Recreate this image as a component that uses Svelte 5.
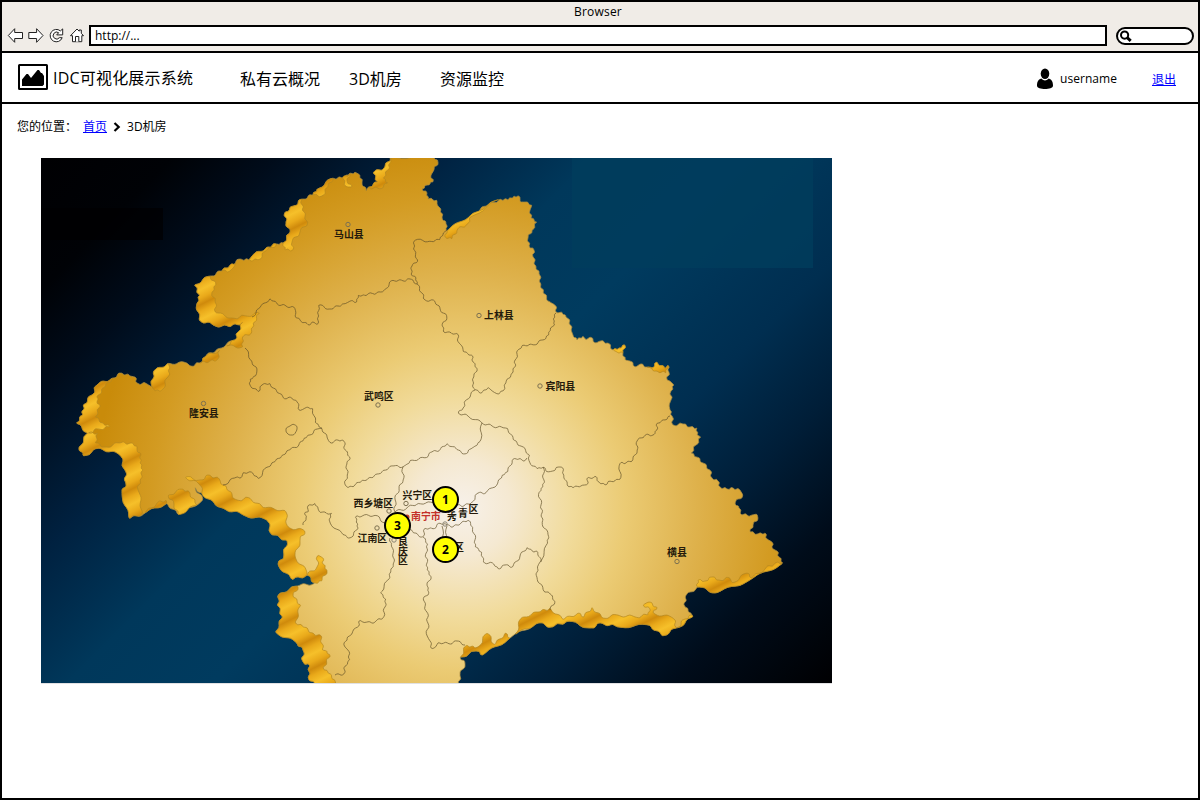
<script>
  const navItems = [
    { label: '私有云概况', width: 109 },
    { label: '3D机房', width: 91 },
    { label: '资源监控', width: 70 }
  ];

  const markers = [
    { n: 1, x: 446, y: 500 },
    { n: 2, x: 446, y: 550 },
    { n: 3, x: 398, y: 526 }
  ];

  const land =
    'M391,157 L385,167 373,173 378,182 368,187 366,191 362,182 360,175 355,172 348,175 342,178 333,178 317,189 313,195 302,199 294,206 285,212 286,222 290,233 283,243 277,244 267,247 252,256 249,260 241,259 230,265 222,271 210,276 194,285 200,295 197,303 199,320 213,325 230,327 243,322 238,332 235,340 217,349 205,357 200,363 190,366 187,363 168,363 153,372 152,387 147,384 137,383 135,377 130,376 122,373 112,378 97,385 92,395 83,405 83,415 76,423 88,433 79,447 83,456 100,448 120,455 125,470 126,483 122,493 129,519 145,513 167,503 178,515 203,500 195,487 205,498 223,508 243,515 267,520 272,535 287,540 284,555 278,565 292,580 307,575 315,583 298,586 280,593 277,605 283,617 275,632 297,643 303,650 303,662 310,666 308,677 315,685 459,685 460,676 465,663 460,657 477,651 483,655 510,638 537,623 553,627 567,621 590,628 602,623 617,627 650,625 662,636 677,628 693,617 691,613 685,607 685,597 697,587 717,593 750,580 783,563 779,557 777,551 773,549 772,542 767,539 765,533 758,534 750,532 753,525 758,518 757,514 752,515 742,515 739,508 735,503 743,495 740,490 733,488 727,489 720,487 718,481 712,478 710,470 703,463 697,457 691,453 696,445 701,437 697,435 697,428 690,427 683,424 673,425 672,416 670,410 669,405 671,400 671,391 674,385 670,381 667,380 669,372 668,365 665,369 657,362 652,368 647,367 640,364 636,367 630,361 625,360 623,353 625,345 619,348 613,350 608,343 600,341 596,343 590,337 586,340 583,336 577,340 573,335 571,330 570,320 566,317 562,312 557,313 555,305 550,302 543,293 541,284 539,274 536,266 533,257 534,250 529,246 528,238 532,230 537,222 531,218 530,210 532,205 525,202 520,202 520,197 514,196 508,200 500,199 487,206 473,213 447,231 446,224 442,217 441,209 437,205 437,200 428,199 427,193 422,189 427,185 433,182 431,175 434,170 438,162 434,157 Z';

  const walls = [
    'M391,157 L385,167 373,173 378,182 368,187 379,189 388,183 383,178 388,170 390,163 Z',
    'M342,178 L347,187 352,187 347,181 350,174 Z',
    'M317,189 L313,195 322,196 328,187 333,178 Z',
    'M302,199 L294,206 285,212 286,222 290,233 283,243 285,250 293,250 292,242 300,232 308,222 302,210 Z',
    'M277,244 L267,247 252,256 249,260 258,260 266,251 Z',
    'M236,263 L230,265 222,271 230,271 234,267 Z',
    'M210,276 L194,285 200,295 197,303 199,320 213,325 230,327 243,322 238,332 235,340 226,346 243,347 242,338 252,332 253,323 260,313 246,316 233,318 216,313 215,302 212,292 216,285 Z',
    'M220,350 L205,357 200,363 210,361 217,360 Z',
    'M168,363 L153,372 152,387 155,391 162,390 168,377 170,368 Z',
    'M112,378 L97,385 92,395 83,405 83,415 76,423 88,433 79,447 83,456 100,448 120,455 125,470 126,483 122,493 129,519 143,513 138,490 140,480 143,470 140,463 141,455 137,450 137,446 130,443 120,443 105,447 95,443 98,433 88,433 99,429 110,427 103,423 95,417 100,407 97,401 98,395 105,387 Z',
    'M145,513 L167,503 166,500 157,503 Z',
    'M168,495 L183,489 190,493 195,503 197,505 178,515 174,504 Z',
    'M185,477 L200,480 210,475 220,480 227,490 237,500 250,498 263,508 285,510 288,527 305,531 300,540 295,557 307,572 307,575 292,580 278,565 284,555 287,540 272,535 267,520 243,515 223,508 205,498 199,484 Z',
    'M307,575 L317,567 318,555 323,558 323,564 327,570 322,581 315,583 Z',
    'M298,586 L280,593 277,605 283,617 275,632 297,643 303,650 303,662 310,666 308,677 315,685 336,685 335,680 328,673 323,667 330,657 327,651 322,650 322,637 313,633 303,627 295,622 301,605 293,597 Z',
    'M460,657 L467,645 475,648 478,647 487,633 495,645 505,633 510,638 483,655 477,651 Z',
    'M515,635 L522,617 540,612 550,608 563,620 578,613 584,617 592,607 602,618 618,615 635,617 648,615 650,609 643,605 648,602 657,607 653,613 673,618 677,628 662,636 650,625 617,627 602,623 590,628 567,621 553,627 537,623 Z',
    'M697,587 L698,580 705,581 712,577 719,580 730,578 732,583 747,573 752,578 765,569 775,563 783,563 750,580 717,593 Z',
    'M677,628 L685,619 692,615 693,617 Z',
    'M445,237 L452,239 457,230 467,224 472,216 500,199 473,213 447,231 Z',
    'M613,350 L619,348 625,345 623,353 617,352 Z',
    'M647,367 L652,368 657,362 665,369 668,365 666,373 657,371 Z'
  ];

  const borders = [
    'M252,317 L260,308 270,298 277,304 286,306 295,308 296,313 295,316 300,320 308,325 314,322 317,325 319,316 318,305 330,309 338,306 345,304 350,301 357,302 358,295 366,296 370,292 375,295 385,289 393,280 403,281 410,279 417,284',
    'M447,230 L443,233 440,240 430,241 415,240 413,249 418,260 412,266 411,274 416,278 417,284',
    'M417,284 L422,293 425,300 435,301 440,309 447,317 442,326 445,333 457,333 459,343 463,347 463,352 472,355 473,362 477,368 474,377 472,386 475,390 482,393 488,387 492,391 497,394 503,391 506,383 511,374 515,367 515,360 519,349 524,345 533,345 543,340 549,335 550,328 555,325 553,319 556,313',
    'M475,390 L466,400 463,408 458,413 468,416 482,423 492,426 503,428 508,428 513,440 521,446 530,455 528,458 530,463 537,469 543,467 548,472 553,471 558,467 562,467 564,475 567,485 573,488 582,485 587,485 588,477 592,479 595,476 599,482 605,485 610,481 620,480 620,463 626,463 633,460 637,450 637,441 645,435 653,435 657,430 657,423 665,420 670,416',
    'M482,423 L480,442 475,446 471,449 465,454 457,450 447,443 440,450 432,452 425,458 412,460 407,464 403,467 394,466 383,470 373,478 362,480 355,485 348,488 345,485 347,475 347,464 350,457 345,450 344,441 338,440 330,443 327,438 322,428 315,423 313,408 305,408 300,411 297,402 292,398 283,398 282,394 277,393 270,383 262,385 258,392 250,385 250,379 256,376 257,371 252,361 245,348',
    'M322,428 L317,429 310,435 304,438 299,445 290,450 282,455 275,462 267,467 258,479 253,473 243,472 242,477 235,478 223,485',
    'M403,467 L403,480 399,488 395,500 395,512',
    'M395,512 L407,508 418,503 433,503 457,505 464,506 472,502 478,493 486,493 498,483 502,475 508,472 512,460 520,458 524,462 527,458',
    'M543,467 L544,480 543,487 539,492 541,505 542,513 542,522 548,535 548,543 540,562 537,567 537,577 543,590 550,594 555,601 550,610',
    'M541,562 L538,552 532,551 527,547 520,556 513,567 505,565 498,569 494,564 483,562 482,552 475,547 475,540 473,527 468,520 461,523 453,527 447,525 440,523 433,529 425,528 423,537 413,533 407,526',
    'M423,537 L428,544 426,553 427,563 427,570 431,576 427,586 429,592 423,600 427,612 428,623 427,636 430,641 432,649 436,647 438,642 449,644 457,641 465,645',
    'M385,523 L375,515 362,516 355,517 358,524 357,530 350,538 343,535 330,523 329,519 332,513 320,513 318,509 315,503 307,507 309,512 305,512 306,518 303,525',
    'M390,538 L391,546 395,560 393,564 391,572 388,580 380,593 386,599 385,607 383,618 377,620 373,624 360,620 358,627 347,637 344,646 348,650 350,660 345,666 344,674 335,675',
    'M286,428 L290,426 293,424 297,426 297,430 294,435 289,435 286,432 Z',
    'M442,526 L443,547',
    'M447,526 L446,546'
  ];

  // Turns a polyline into a wavy, rounded outline. The wave depends only on a
  // segment's two ends, so shapes that share an edge keep it in common.
  function wavy(d, sharp = 0.3) {
    const closed = d.includes('Z');
    const nums = d.match(/[\d.]+/g).map(Number);
    const pts = [];
    for (let i = 0; i < nums.length; i += 2) pts.push([nums[i], nums[i + 1]]);
    const out = [];
    const count = closed ? pts.length : pts.length - 1;
    for (let i = 0; i < count; i++) {
      let a = pts[i];
      let b = pts[(i + 1) % pts.length];
      out.push(a);
      const len = Math.hypot(b[0] - a[0], b[1] - a[1]);
      if (len < 6 || len > 60) continue;
      const flip = a[0] > b[0] || (a[0] === b[0] && a[1] > b[1]);
      const [p, q] = flip ? [b, a] : [a, b];
      const nx = -(q[1] - p[1]) / len;
      const ny = (q[0] - p[0]) / len;
      const h = (p[0] * 7 + p[1] * 13 + q[0] * 5 + q[1] * 3) % 2 ? 1 : -1;
      const amp = h * Math.min(1.7, len * 0.14);
      const mids = [
        [p[0] + (q[0] - p[0]) * 0.35 + nx * amp, p[1] + (q[1] - p[1]) * 0.35 + ny * amp],
        [p[0] + (q[0] - p[0]) * 0.68 - nx * amp, p[1] + (q[1] - p[1]) * 0.68 - ny * amp]
      ];
      out.push(...(flip ? mids.reverse() : mids));
    }
    if (!closed) out.push(pts[pts.length - 1]);
    const n = out.length;
    const mix = (u, v, t) => [(u[0] + (v[0] - u[0]) * t).toFixed(1), (u[1] + (v[1] - u[1]) * t).toFixed(1)].join();
    if (closed) {
      let s = 'M' + mix(out[0], out[1], sharp);
      for (let i = 1; i <= n; i++) {
        const c = out[i % n];
        s += ' L' + mix(c, out[(i - 1) % n], sharp) + ' Q' + c + ' ' + mix(c, out[(i + 1) % n], sharp);
      }
      return s + ' Z';
    }
    let s = 'M' + out[0];
    for (let i = 1; i < n - 1; i++) {
      s += ' L' + mix(out[i], out[i - 1], 0.45) + ' Q' + out[i] + ' ' + mix(out[i], out[i + 1], 0.45);
    }
    return s + ' L' + out[n - 1];
  }

  const places = [
    { t: '马山县', x: 334, y: 237.5, cx: 348, cy: 224.5 },
    { t: '上林县', x: 484, y: 319, cx: 479, cy: 315.5 },
    { t: '武鸣区', x: 364, y: 400, cx: 378, cy: 405 },
    { t: '宾阳县', x: 545.5, y: 390, cx: 540, cy: 386 },
    { t: '隆安县', x: 189, y: 416.5, cx: 203.5, cy: 403.5 },
    { t: '横县', x: 667, y: 555.5, cx: 677, cy: 561.5 },
    { t: '兴宁区', x: 402.5, y: 499, cx: 406, cy: 503.5 },
    { t: '西乡塘区', x: 353.5, y: 506.5, cx: 389, cy: 511 },
    { t: '江南区', x: 357.5, y: 542, cx: 377, cy: 528 }
  ];

  const singles = [
    ['秀', 447, 520],
    ['青', 458, 516.5],
    ['区', 468.5, 512.5],
    ['区', 454, 550.5]
  ];
</script>

<div class="window">
  <header class="chrome">
    <div class="title">Browser</div>
    <div class="tools">
      <svg class="controls" width="80" height="20" viewBox="0 0 80 20">
        <g fill="#fff" stroke="#222" stroke-width="1">
          <path d="M1.3,9.5 L7.7,2.7 V6.5 H15.5 V12.5 H7.7 V16.3 Z" />
          <path d="M36,9.5 L29.6,2.7 V6.5 H21.8 V12.5 H29.6 V16.3 Z" />
          <path d="M53.4,4.9 L55.7,2.9 V8.9 H49.7 L51.7,6.7 A3.5,3.5 0 1 0 52.4,11.7 H55.2 A6.2,6.2 0 1 1 53.4,4.9 Z" />
          <path d="M63.5,9.7 L70,3 72.2,5.2 V4 H74.3 V7.3 L76.5,9.7 H74.8 V15.7 H65.5 V9.7 Z" />
          <path d="M68.5,15.7 V10.5 H71.8 V15.7" />
        </g>
      </svg>
      <div class="address">http://...</div>
      <div class="search">
        <svg width="14" height="14" viewBox="0 0 14 14">
          <circle cx="5.6" cy="6.1" r="3.6" fill="#fff" stroke="#000" stroke-width="2" />
          <path d="M8.2,8.7 L11.7,11.9" stroke="#000" stroke-width="3" />
        </svg>
      </div>
    </div>
  </header>

  <nav class="navbar">
    <svg class="logo" width="30" height="26" viewBox="0 0 30 26">
      <rect x="1" y="1" width="28" height="24" rx=".5" fill="#fff" stroke="#000" stroke-width="2" />
      <path d="M4,22 V15.5 L8.5,10 10,10 13,14 19.5,6 21,6 23,9 24,9 26,12 V20.5 L24.5,22 Z" />
    </svg>
    <span class="brand">IDC可视化展示系统</span>
    {#each navItems as item}
      <span class="item" style="width:{item.width}px">{item.label}</span>
    {/each}
    <div class="user">
      <svg width="18" height="22" viewBox="0 0 18 22">
        <ellipse cx="9" cy="5.7" rx="4.3" ry="5.2" />
        <path d="M5.3,10.6 Q9,14.6 12.7,10.6 C16,11.8 17,14 17,17.8 C17,20 13,21 9,21 C5,21 1,20 1,17.8 C1,14 2,11.8 5.3,10.6 Z" />
      </svg>
      <span class="name">username</span>
      <a href="#logout">退出</a>
    </div>
  </nav>

  <div class="crumbs">
    <span class="where">您的位置：</span>
    <a href="#home">首页</a>
    <svg width="8" height="10" viewBox="0 0 8 10">
      <path d="M1.5,1 L5.7,5 1.5,9" fill="none" stroke="#000" stroke-width="2.2" />
    </svg>
    <span>3D机房</span>
  </div>

  <main class="map">
    <svg width="791" height="526" viewBox="41 158 791 526">
      <defs>
        <linearGradient id="sea" gradientUnits="userSpaceOnUse" x1="41" y1="158" x2="699" y2="816">
          <stop offset="0" stop-color="#000002" />
          <stop offset=".1" stop-color="#000206" />
          <stop offset=".18" stop-color="#000c1b" />
          <stop offset=".3" stop-color="#002140" />
          <stop offset=".42" stop-color="#00385b" />
          <stop offset=".53" stop-color="#003b5f" />
          <stop offset=".68" stop-color="#002e50" />
          <stop offset=".78" stop-color="#001e38" />
          <stop offset=".88" stop-color="#000c1a" />
          <stop offset="1" stop-color="#000002" />
        </linearGradient>
        <radialGradient id="gold" gradientUnits="userSpaceOnUse" cx="462" cy="508" r="370">
          <stop offset="0" stop-color="#f7f1ea" />
          <stop offset=".13" stop-color="#f5e9d2" />
          <stop offset=".3" stop-color="#f1db9b" />
          <stop offset=".44" stop-color="#ebcb74" />
          <stop offset=".64" stop-color="#deb14b" />
          <stop offset=".84" stop-color="#d39b22" />
          <stop offset="1" stop-color="#c98b0a" />
        </radialGradient>
        <linearGradient id="cliff" gradientUnits="userSpaceOnUse" x1="0" y1="0" x2="6" y2="12" spreadMethod="reflect">
          <stop offset="0" stop-color="#f6c02a" />
          <stop offset=".55" stop-color="#e9a91a" />
          <stop offset="1" stop-color="#cf8a0c" />
        </linearGradient>
      </defs>
      <rect x="41" y="158" width="791" height="525" fill="url(#sea)" />
      <rect x="572" y="158" width="241" height="110" fill="#003d5d" opacity=".8" />
      <rect x="41" y="208" width="122" height="32" fill="#000002" opacity=".7" />
      <path d={wavy(land)} fill="url(#gold)" stroke="#a88b42" stroke-width=".8" />
      {#each walls as d}
        <path d={wavy(d)} fill="url(#cliff)" stroke="#b3871f" stroke-width=".7" stroke-linejoin="round" />
      {/each}
      <g fill="none" stroke="#5e4e25" stroke-opacity=".75" stroke-width=".9" stroke-linejoin="round">
        {#each borders as d}
          <path d={wavy(d)} />
        {/each}
      </g>
      <g class="labels">
        {#each places as p}
          <circle cx={p.cx} cy={p.cy} r="2.2" fill="none" stroke="#7d7151" />
          <text x={p.x} y={p.y}>{p.t}</text>
        {/each}
        <circle cx="445" cy="524" r="2.2" fill="none" stroke="#8b8473" />
        <circle cx="394" cy="540" r="2.2" fill="none" stroke="#8b8473" />
        {#each singles as [t, x, y]}
          <text {x} {y}>{t}</text>
        {/each}
        <text class="vertical" x="403" y="536">良庆区</text>
        <circle cx="407" cy="517" r="2.5" fill="#c43c28" />
        <text class="city" x="411" y="520">南宁市</text>
      </g>
      <rect x="41" y="683" width="791" height="1" fill="#e1e1e3" />
    </svg>
    {#each markers as m}
      <div class="marker" style="left:{m.x - 55}px;top:{m.y - 172}px">{m.n}</div>
    {/each}
  </main>
</div>

<style>
  :global(body) {
    background: #fff;
  }
  .window {
    box-sizing: border-box;
    width: 1200px;
    height: 800px;
    border: 2px solid #000;
    background: #fff;
    color: #000;
    font-family: 'Open Sans', 'Noto Sans CJK SC', sans-serif;
    font-size: 12px;
    overflow: hidden;
  }
  svg {
    display: block;
    flex: none;
  }
  .chrome {
    height: 49px;
    background: #f0ece7;
    border-bottom: 2px solid #000;
  }
  .title {
    height: 23px;
    line-height: 20px;
    text-align: center;
    padding-right: 4px;
    letter-spacing: 0.2px;
  }
  .tools {
    display: flex;
    align-items: center;
    height: 21px;
    padding: 0 2px 0 5px;
  }
  .controls {
    margin-right: 2px;
  }
  .address {
    box-sizing: border-box;
    width: 1018px;
    height: 21px;
    border: 2px solid #000;
    background: #fff;
    line-height: 17px;
    padding-left: 4px;
  }
  .search {
    box-sizing: border-box;
    width: 78px;
    height: 18px;
    margin-left: 9px;
    border: 2px solid #000;
    border-radius: 9px;
    background: #fff;
    padding-left: 1px;
  }
  .navbar {
    display: flex;
    align-items: center;
    height: 49px;
    padding-left: 16px;
    border-bottom: 2px solid #000;
    font-size: 16px;
    white-space: nowrap;
  }
  .brand {
    width: 192px;
    padding-left: 5px;
    box-sizing: border-box;
    margin-top: -1px;
    letter-spacing: 0.2px;
  }
  .item {
    flex: none;
    margin-top: 1px;
  }
  .logo {
    margin-top: -1px;
  }
  .user {
    display: flex;
    align-items: center;
    margin-left: auto;
    padding-right: 22px;
    font-size: 12px;
  }
  .user svg {
    margin-top: 3px;
  }
  .name {
    width: 92px;
    padding-left: 6px;
    margin-top: 2px;
    letter-spacing: 0.05px;
  }
  .user a {
    margin-top: 2px;
  }
  a {
    color: #00f;
    text-decoration: underline;
  }
  .crumbs {
    display: flex;
    align-items: center;
    height: 44px;
    padding-left: 15px;
  }
  .where {
    width: 66px;
  }
  .crumbs svg {
    margin: 1px 6px 0;
  }
  .map {
    position: relative;
    width: 791px;
    height: 526px;
    margin: 10px 0 0 39px;
  }
  .labels {
    font: 700 9.9px 'Noto Sans CJK SC', sans-serif;
    fill: #241a0b;
  }
  .vertical {
    writing-mode: vertical-rl;
  }
  .city {
    fill: #c43028;
  }
  .marker {
    position: absolute;
    box-sizing: border-box;
    width: 27px;
    height: 27px;
    border: 2px solid #000;
    border-radius: 50%;
    background: #ff0;
    font-weight: 700;
    line-height: 23px;
    text-align: center;
  }
</style>
